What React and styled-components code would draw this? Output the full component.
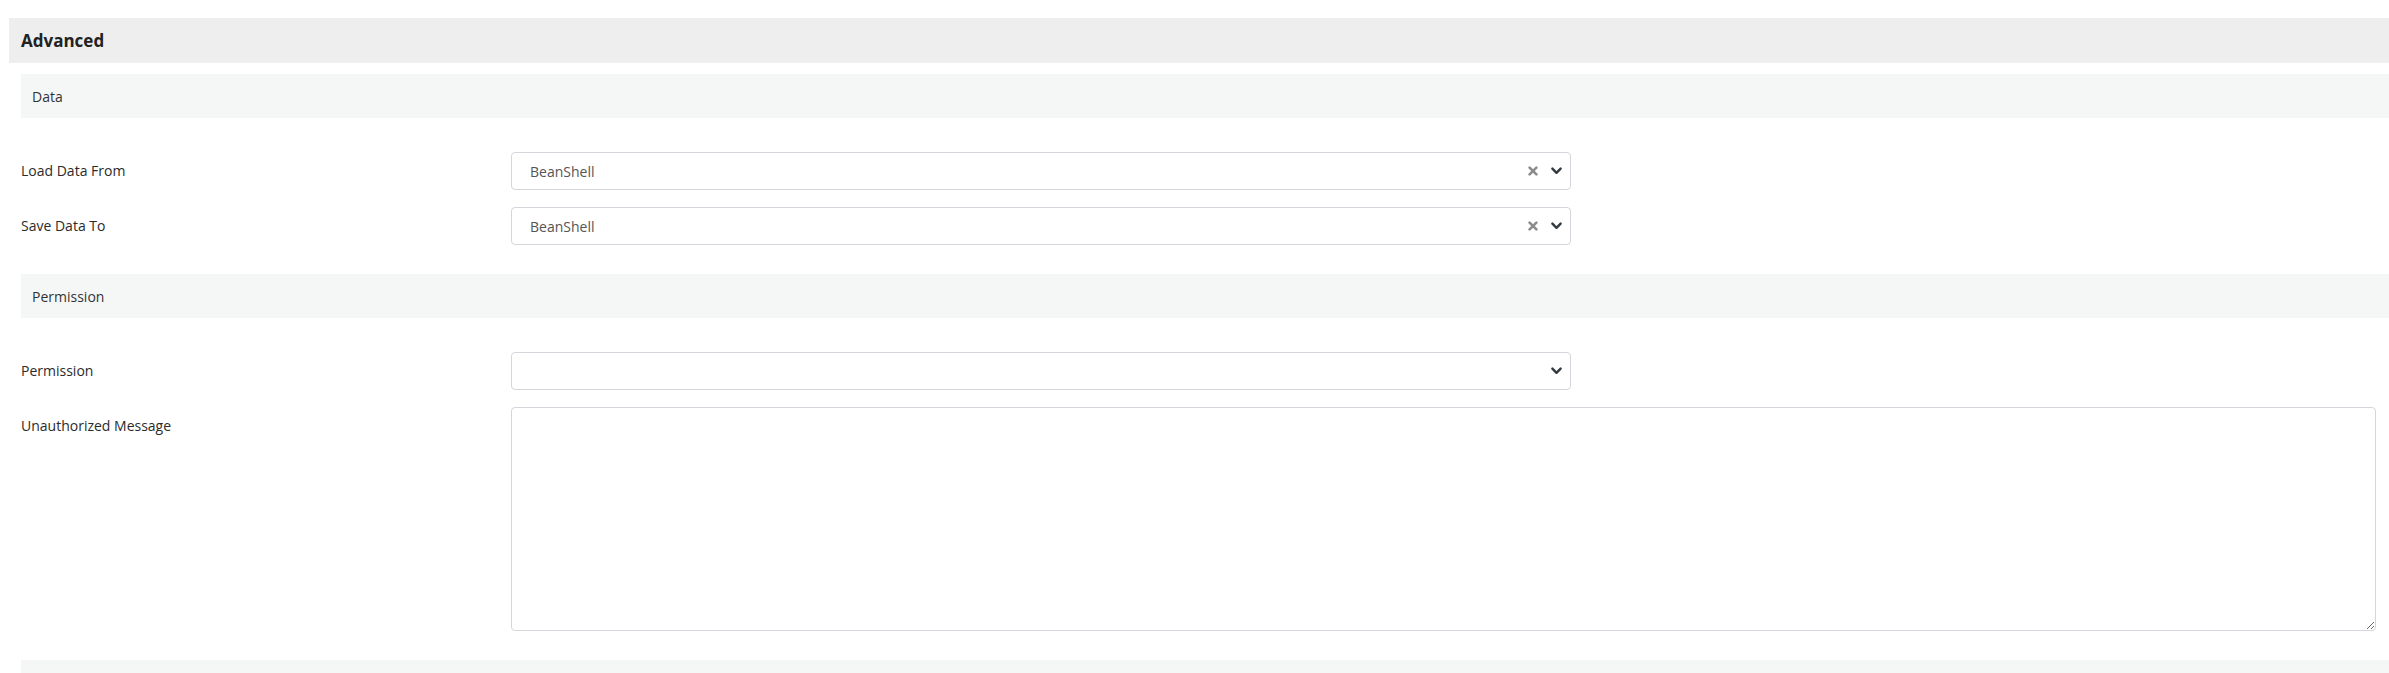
import React from "react";
import styled, { createGlobalStyle } from "styled-components";

const Global = createGlobalStyle`
  html, body { margin: 0; padding: 0; background: #ffffff; }
  body { font-family: "Open Sans", "Noto Sans", sans-serif; color: #333; overflow: hidden; }
`;

const Page = styled.div`
  padding: 18px 0 0 9px;
  width: 2389px;
  box-sizing: border-box;
`;

const PanelHeader = styled.div`
  height: 45px;
  background: #eeeeee;
  display: flex;
  align-items: center;
  padding-left: 12px;
  font-size: 17px;
  font-weight: 700;
  color: #222;
`;

const Body = styled.div`
  padding: 11px 0 0 12px;
  display: flex;
  flex-direction: column;
`;

const SubHeader = styled.div`
  height: 44px;
  background: #f5f7f7;
  display: flex;
  align-items: center;
  padding-left: 11px;
  font-size: 14px;
  color: #333;
  margin-bottom: ${(p) => p.$after}px;
`;

const Row = styled.div`
  display: grid;
  grid-template-columns: 490px 1fr;
  align-items: start;
  margin-bottom: ${(p) => p.$after}px;
`;

const Label = styled.div`
  font-size: 14px;
  line-height: 38px;
  color: #2b2b2b;
`;

const SelectBox = styled.div`
  width: 1060px;
  height: 38px;
  box-sizing: border-box;
  border: 1px solid #d3d6da;
  border-radius: 4px;
  background: #fff;
  display: flex;
  align-items: center;
  padding: 0 8px 0 18px;
  font-size: 14px;
  color: #555;
`;

const Value = styled.span`
  flex: 1;
`;

const ClearIcon = styled.svg`
  width: 10px;
  height: 10px;
  margin-right: 13px;
`;

const Chevron = styled.svg`
  width: 11px;
  height: 8px;
`;

const TextArea = styled.textarea`
  width: 1865px;
  height: 224px;
  box-sizing: border-box;
  border: 1px solid #d3d6da;
  border-radius: 4px;
  background: #fff;
  font-family: "Open Sans", sans-serif;
  font-size: 14px;
  outline: none;
  margin: 0;
  display: block;
`;

const Select = ({ value, clearable }) => (
  <SelectBox>
    <Value>{value}</Value>
    {clearable && (
      <ClearIcon viewBox="0 0 10 10">
        <path d="M1.6 1.6 L8.4 8.4 M8.4 1.6 L1.6 8.4" stroke="#8c8c8c" strokeWidth="2.6" strokeLinecap="round" />
      </ClearIcon>
    )}
    <Chevron viewBox="0 0 11 8">
      <path d="M1.4 1.6 L5.5 5.8 L9.6 1.6" fill="none" stroke="#343a40" strokeWidth="2.4" strokeLinecap="round" strokeLinejoin="round" />
    </Chevron>
  </SelectBox>
);

export default function App() {
  return (
    <>
      <Global />
      <Page>
        <PanelHeader>Advanced</PanelHeader>
        <Body>
          <SubHeader $after={34}>Data</SubHeader>
          <Row $after={17}>
            <Label>Load Data From</Label>
            <Select value="BeanShell" clearable />
          </Row>
          <Row $after={29}>
            <Label>Save Data To</Label>
            <Select value="BeanShell" clearable />
          </Row>
          <SubHeader $after={34}>Permission</SubHeader>
          <Row $after={17}>
            <Label>Permission</Label>
            <Select value="" />
          </Row>
          <Row $after={29}>
            <Label>Unauthorized Message</Label>
            <TextArea />
          </Row>
          <SubHeader $after={0} />
        </Body>
      </Page>
    </>
  );
}
